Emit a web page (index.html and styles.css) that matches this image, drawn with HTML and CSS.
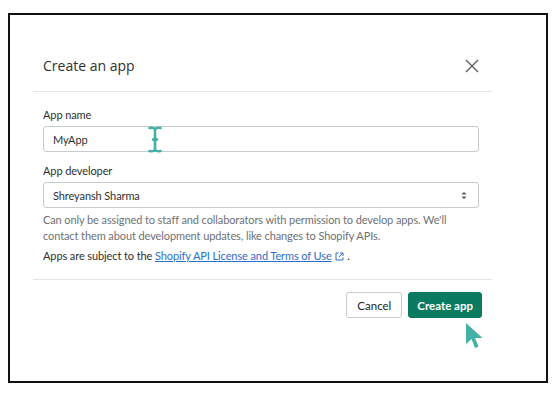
FILE: index.html
```html
<!DOCTYPE html>
<html>
<head>
<meta charset="utf-8">
<link rel="stylesheet" href="styles.css">
</head>
<body>
<div class="frame">
  <div class="modal">
    <div class="head">
      <h1 class="title">Create an app</h1>
      <span class="close">
        <svg width="14" height="14" viewBox="0 0 14 14"><path d="M1 1 L13 13 M13 1 L1 13" stroke="#5c5f62" stroke-width="1.4" fill="none"/></svg>
      </span>
    </div>
    <div class="body">
      <div class="label">App name</div>
      <div class="field">
        <span>MyApp</span>
        <svg class="ibeam" width="14" height="27" viewBox="0 0 14 27"><path d="M1.5 2 Q7 1 7 4.5 Q7 1 12.5 2 M7 4.5 V11.5 M5 13.5 H9 M7 15.5 V22.5 M1.5 25 Q7 26 7 22.5 Q7 26 12.5 25" stroke="#43b1a5" stroke-width="2.6" fill="none" stroke-linecap="round"/><circle cx="7" cy="13.5" r="2.2" fill="#43b1a5"/></svg>
      </div>
      <div class="label">App developer</div>
      <div class="field select">
        <span>Shreyansh Sharma</span>
        <svg class="arrows" width="6" height="9" viewBox="0 0 6 9"><path d="M0.5 3.5 L3 0.8 L5.5 3.5 Z M0.5 5.5 L3 8.2 L5.5 5.5 Z" fill="#5c5f62"/></svg>
      </div>
      <p class="help">Can only be assigned to staff and collaborators with permission to develop apps. We'll contact them about development updates, like changes to Shopify APIs.</p>
      <p class="terms">Apps are subject to the <a class="link" href="#">Shopify API License and Terms of Use</a> <svg class="ext" width="9" height="9" viewBox="0 0 9 9"><path d="M3.5 1 H1 V8 H8 V5.5 M5 1 H8 V4 M8 1 L4 5" stroke="#2c6ecb" stroke-width="1" fill="none"/></svg> .</p>
    </div>
    <div class="foot">
      <button class="btn">Cancel</button>
      <button class="btn primary">Create app</button>
      <svg class="pointer" width="20" height="29" viewBox="0 0 20 29"><path d="M2 1 L2 22 L7.5 17 L11 26 L14.5 24.5 L11 16 L18.5 16 Z" fill="#43b1a5"/></svg>
    </div>
  </div>
</div>
</body>
</html>
```

FILE: styles.css
```css
* { box-sizing: border-box; }
html, body { margin: 0; padding: 0; background: #fff; }
body {
  font-family: "Lato", "Open Sans", sans-serif;
  color: #303030;
  padding: 13px 0 0 8px;
}
.frame {
  width: 540px;
  height: 370px;
  border: 2px solid #111;
  padding: 30px 0 0 23px;
}
.modal {
  width: 459px;
}
.head {
  height: 47px;
  display: flex;
  align-items: center;
  justify-content: space-between;
  padding: 0 13px 5px 10px;
  border-bottom: 1px solid #e4e5e7;
}
.title {
  margin: 0;
  font-family: "Open Sans", sans-serif;
  font-size: 14px;
  font-weight: 400;
  color: #303030;
}
.close { display: flex; }
.body {
  padding: 15px 13px 15px 10px;
}
.label {
  font-size: 11px;
  letter-spacing: -0.1px;
  line-height: 16px;
  color: #303030;
  margin-bottom: 3px;
}
.field {
  position: relative;
  height: 26px;
  border: 1px solid #c9cccf;
  border-radius: 3px;
  display: flex;
  align-items: center;
  padding: 0 9px;
  font-size: 11px;
  letter-spacing: -0.1px;
  color: #303030;
  margin-bottom: 11px;
}
.field.select { justify-content: space-between; margin-bottom: 4px; padding-right: 11px; }
.ibeam { position: absolute; left: 104px; top: -1px; }
.help {
  margin: 0;
  font-size: 11px;
  letter-spacing: -0.1px;
  line-height: 16px;
  color: #6d7175;
}
.terms {
  margin: 4px 0 0;
  font-size: 11px;
  letter-spacing: -0.1px;
  line-height: 16px;
  color: #303030;
}
.link { color: #2c6ecb; text-decoration: underline; }
.ext { vertical-align: -1px; margin-left: 1px; }
.foot {
  position: relative;
  border-top: 1px solid #e4e5e7;
  display: flex;
  justify-content: flex-end;
  gap: 6px;
  padding: 12px 10px 0 0;
}
.btn {
  height: 26px;
  border: 1px solid #c9cccf;
  border-radius: 3px;
  background: #fff;
  font-family: "Lato", "Open Sans", sans-serif;
  font-size: 11.5px;
  color: #202223;
  padding: 0 10px;
}
.btn.primary {
  background: #0a7b60;
  border-color: #0a7b60;
  color: #fff;
  font-weight: 700;
  padding: 0 8px;
}
.pointer { position: absolute; right: 8px; top: 42px; }
```
